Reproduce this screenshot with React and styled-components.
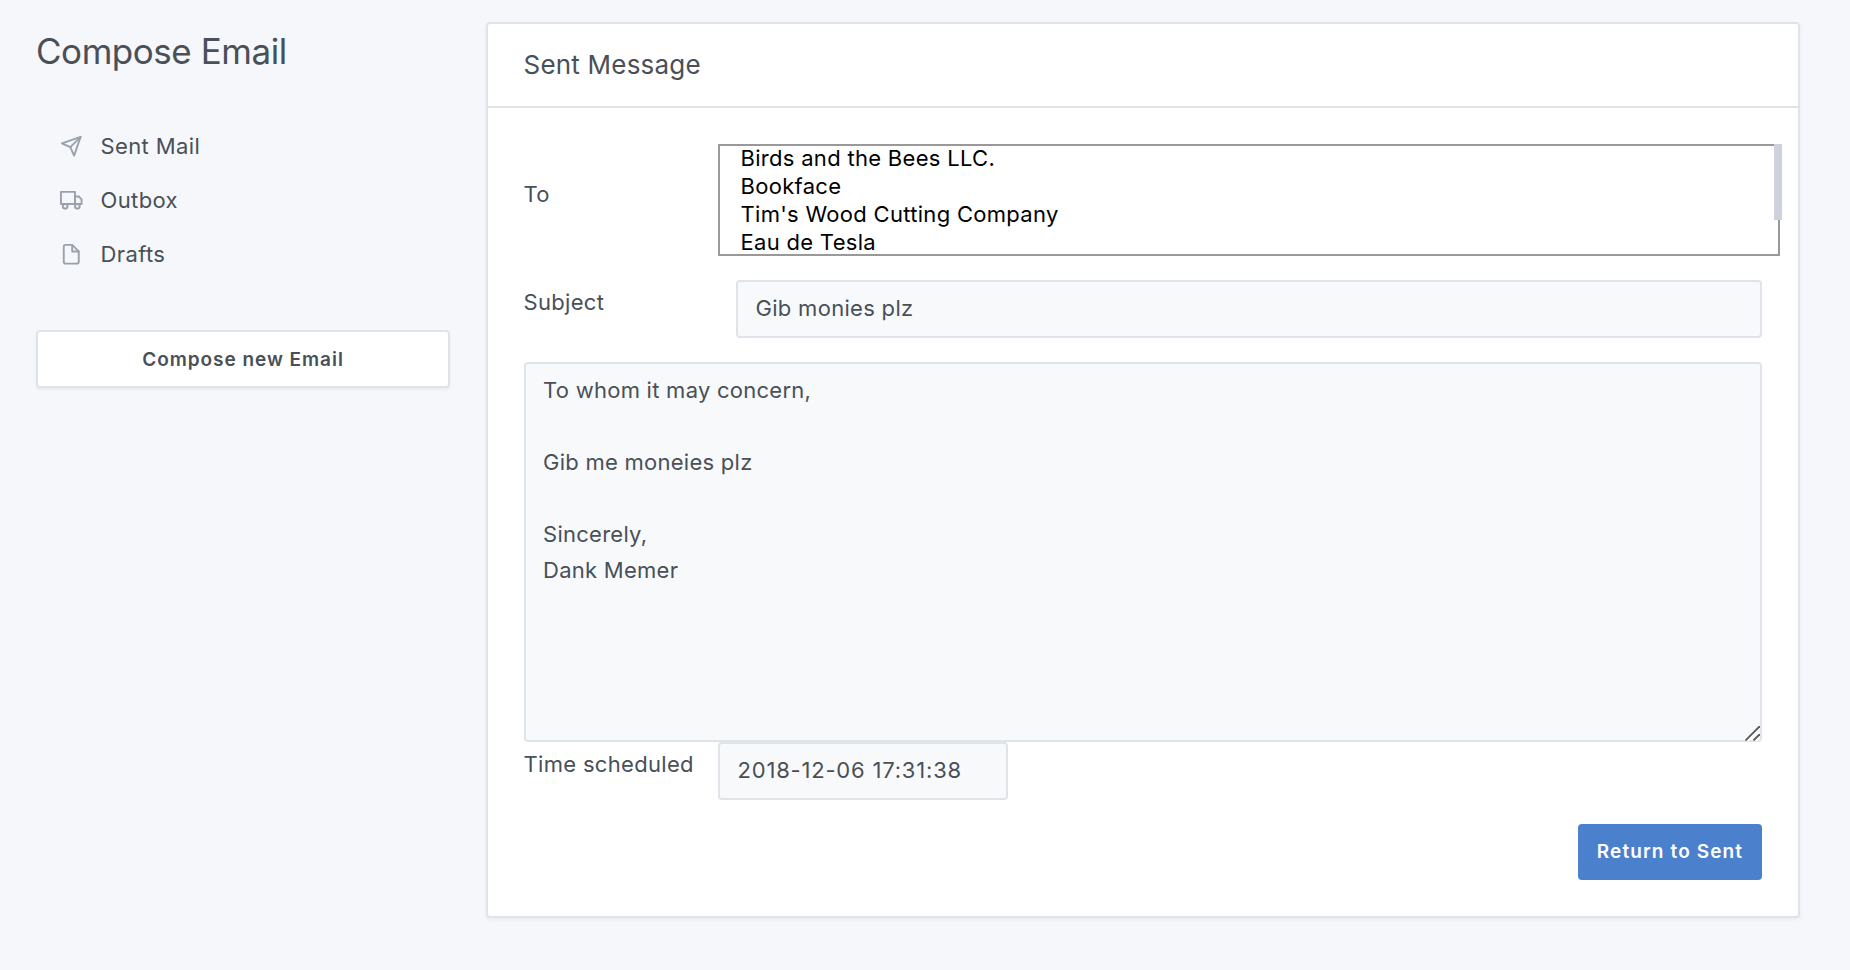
import React from "react";
import styled, { createGlobalStyle } from "styled-components";

const colors = {
  page: "#f5f7fb",
  text: "#495057",
  icon: "#9aa0ac",
  line: "#dfe4eb",
  field: "#f8f9fb",
  primary: "#4a80cc",
};

const GlobalStyle = createGlobalStyle`
  *, *::before, *::after { box-sizing: border-box; }
  body {
    margin: 0;
    background: ${colors.page};
    color: ${colors.text};
    font-family: Inter, "Liberation Sans", sans-serif;
    font-size: 22px;
    line-height: 36px;
    letter-spacing: 0.32px;
  }
`;

const Page = styled.div`
  display: grid;
  grid-template-columns: 414px 1314px;
  column-gap: 36px;
  align-items: start;
  min-height: 970px;
  padding: 22px 50px 52px 36px;
`;

const Sidebar = styled.aside`
  display: flex;
  flex-direction: column;
`;

const Title = styled.h1`
  margin: 9px 0 48px;
  font-size: 35px;
  line-height: 40px;
  font-weight: 400;
  letter-spacing: -0.46px;
`;

const Nav = styled.nav`
  display: flex;
  flex-direction: column;
  margin-bottom: 49px;
`;

const NavItem = styled.a`
  display: flex;
  align-items: center;
  gap: 18px;
  height: 54px;
  padding-left: 24px;
  color: inherit;
  text-decoration: none;
  letter-spacing: 0.38px;
`;

const Icon = styled.svg`
  width: 22.5px;
  height: 22.5px;
  flex: none;
  fill: none;
  stroke: ${colors.icon};
  stroke-width: 2;
  stroke-linecap: round;
  stroke-linejoin: round;
`;

const Button = styled.button`
  height: ${(p) => (p.$primary ? 56 : 58)}px;
  width: ${(p) => (p.$primary ? "184px" : "100%")};
  padding: ${(p) => (p.$primary ? 0 : 2)}px 0 0;
  border: 2px solid ${(p) => (p.$primary ? colors.primary : colors.line)};
  border-radius: 4px;
  background: ${(p) => (p.$primary ? colors.primary : "#fff")};
  color: ${(p) => (p.$primary ? "#fff" : colors.text)};
  box-shadow: ${(p) => (p.$primary ? "none" : "0 2px 3px rgba(0, 0, 0, 0.05)")};
  font: 600 19px/30px Inter, "Liberation Sans", sans-serif;
  letter-spacing: ${(p) => (p.$primary ? 1.12 : 0.96)}px;
  white-space: nowrap;
`;

const Card = styled.main`
  border: 2px solid ${colors.line};
  border-radius: 4px;
  background: #fff;
  box-shadow: 0 2px 4px rgba(0, 0, 0, 0.05);
`;

const CardHeader = styled.header`
  display: flex;
  align-items: center;
  height: 84px;
  padding: 0 36px;
  border-bottom: 2px solid ${colors.line};
`;

const CardTitle = styled.h2`
  margin: 0;
  font-size: 26px;
  font-weight: 400;
  letter-spacing: 0.21px;
  text-indent: -0.5px;
`;

const CardBody = styled.form`
  display: flex;
  flex-direction: column;
  padding: 36px;
`;

const FormRow = styled.div`
  display: grid;
  grid-template-columns: 194px 1fr;
  align-items: start;
  margin-bottom: ${(p) => p.$gap}px;
`;

const Label = styled.label`
  padding-top: ${(p) => p.$top || 4}px;
  text-indent: -0.5px;
  white-space: nowrap;
`;

const Recipients = styled.div`
  position: relative;
  width: 1062px;
  height: 112px;
  border: 2px solid #999;
  background: #fff;
`;

const Options = styled.ul`
  margin: -2px 0 0;
  padding: 0 0 0 20.5px;
  list-style: none;
  color: #000;
  line-height: 28px;
  letter-spacing: 0.3px;
`;

const ScrollThumb = styled.div`
  position: absolute;
  top: -2px;
  right: -4px;
  width: 8px;
  height: 76px;
  background: #ced2dc;
`;

const Input = styled.input`
  width: ${(p) => p.$width}px;
  height: 58px;
  margin-left: ${(p) => p.$indent || 0}px;
  padding: 0 17px 2px 17.5px;
  border: 2px solid ${colors.line};
  border-radius: 4px;
  outline: none;
  background: ${colors.field};
  color: inherit;
  font: inherit;
  letter-spacing: ${(p) => p.$tracking || 0.3}px;
`;

const MessageWrap = styled.div`
  position: relative;
  display: flex;
`;

const Message = styled.textarea`
  width: 100%;
  height: 380px;
  padding: 8px 17px;
  border: 2px solid ${colors.line};
  border-radius: 4px;
  outline: none;
  resize: none;
  background: ${colors.field};
  color: inherit;
  font: inherit;
  letter-spacing: 0.26px;
`;

const Grip = styled.svg`
  position: absolute;
  right: 2px;
  bottom: 1px;
  width: 15px;
  height: 15px;
  fill: none;
`;

const Actions = styled.footer`
  display: flex;
  justify-content: flex-end;
`;

const recipients = [
  "Birds and the Bees LLC.",
  "Bookface",
  "Tim's Wood Cutting Company",
  "Eau de Tesla",
];

const message = `To whom it may concern,

Gib me moneies plz

Sincerely,
Dank Memer`;

const SendIcon = () => (
  <Icon viewBox="0 0 24 24">
    <line x1="22" y1="2" x2="11" y2="13" />
    <polygon points="22 2 15 22 11 13 2 9 22 2" />
  </Icon>
);

const TruckIcon = () => (
  <Icon viewBox="0 0 24 24">
    <rect x="1" y="3" width="15" height="13" />
    <polygon points="16 8 20 8 23 11 23 16 16 16 16 8" />
    <circle cx="5.5" cy="18.5" r="2.5" />
    <circle cx="18.5" cy="18.5" r="2.5" />
  </Icon>
);

const FileIcon = () => (
  <Icon viewBox="0 0 24 24">
    <path d="M13 2H6a2 2 0 0 0-2 2v16a2 2 0 0 0 2 2h12a2 2 0 0 0 2-2V9z" />
    <polyline points="13 2 13 9 20 9" />
  </Icon>
);

export default function App() {
  return (
    <>
      <GlobalStyle />
      <Page>
        <Sidebar>
          <Title>Compose Email</Title>
          <Nav>
            <NavItem><SendIcon />Sent Mail</NavItem>
            <NavItem><TruckIcon />Outbox</NavItem>
            <NavItem><FileIcon />Drafts</NavItem>
          </Nav>
          <Button type="button">Compose new Email</Button>
        </Sidebar>
        <Card>
          <CardHeader>
            <CardTitle>Sent Message</CardTitle>
          </CardHeader>
          <CardBody>
            <FormRow $gap={24}>
              <Label $top={32}>To</Label>
              <Recipients>
                <Options>
                  {recipients.map((name) => <li key={name}>{name}</li>)}
                </Options>
                <ScrollThumb />
              </Recipients>
            </FormRow>
            <FormRow $gap={24}>
              <Label>Subject</Label>
              <Input $width={1026} $indent={18} readOnly value="Gib monies plz" />
            </FormRow>
            <MessageWrap>
              <Message readOnly spellCheck={false} value={message} />
              <Grip viewBox="0 0 15 15">
                <path d="M2 15.5L15.5 2M10 15.5L15.5 10" stroke="#fff" strokeWidth="2" />
                <path d="M0.5 14.5L14 1H15M8.5 14.5L14 9H15" stroke="#5c5c5c" strokeWidth="1.8" />
              </Grip>
            </MessageWrap>
            <FormRow $gap={24}>
              <Label>Time scheduled</Label>
              <Input $width={290} $tracking={0.8} readOnly value="2018-12-06 17:31:38" />
            </FormRow>
            <Actions>
              <Button type="button" $primary>Return to Sent</Button>
            </Actions>
          </CardBody>
        </Card>
      </Page>
    </>
  );
}
